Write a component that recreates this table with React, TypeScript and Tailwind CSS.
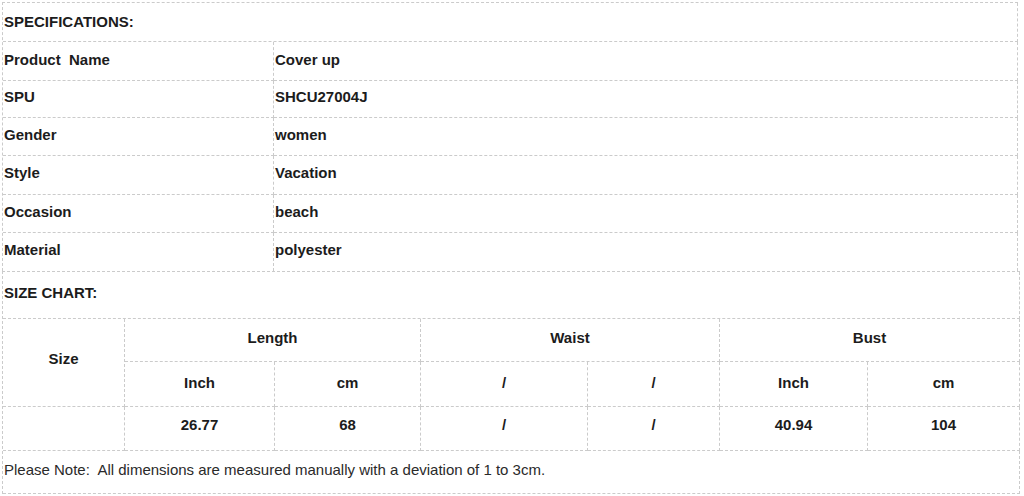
const specs: [string, string][] = [
  ["Product  Name", "Cover up"],
  ["SPU", "SHCU27004J"],
  ["Gender", "women"],
  ["Style", "Vacation"],
  ["Occasion", "beach"],
  ["Material", "polyester"],
];

// row heights measured line to line
const specHeights = ["h-[39px]", "h-[37px]", "h-[38px]", "h-[39px]", "h-[38px]", "h-[38px]"];

const line = "border-dashed border-[#cbcbcb]";
const cell = `border-r border-b ${line} flex items-center`;

export default function App() {
  return (
    <div
      className="min-h-screen bg-white text-[15px] leading-none text-[#1c1c1c]"
      style={{ fontFamily: '"Liberation Sans", Arial, sans-serif', whiteSpace: "pre" }}
    >
      {/* Specifications */}
      <div className={`ml-[2px] mt-[2px] w-[1016px] border-l border-t ${line}`}>
        <div className={`${cell} h-[39px] pb-[2px] pl-[1px] font-bold`}>SPECIFICATIONS:</div>
        <div className="grid grid-cols-[271px_1fr]">
          {specs.map(([label, value], i) => {
            const last = i === specs.length - 1;
            const cls = `${last ? `border-r ${line} flex items-center` : cell} ${specHeights[i]} ${i === 0 ? "pb-[3px]" : "pb-[5px]"} pl-[1px] font-bold`;
            return [
              <div key={label} className={cls}>
                {label}
              </div>,
              <div key={value} className={cls}>
                {value}
              </div>,
            ];
          })}
        </div>
      </div>

      {/* Size chart */}
      <div className={`ml-[2px] grid w-[1018px] grid-cols-[122px_150px_146px_167px_132px_148px_152px] grid-rows-[47px_43px_45px_44px_43px] border-l border-t ${line} font-bold`}>
        <div className={`${cell} col-span-7 pb-[6px] pl-[1px]`}>SIZE CHART:</div>

        <div className={`${cell} row-span-2 justify-center pb-[9px]`}>Size</div>
        <div className={`${cell} col-span-2 justify-center pb-[5px]`}>Length</div>
        <div className={`${cell} col-span-2 justify-center pb-[5px]`}>Waist</div>
        <div className={`${cell} col-span-2 justify-center pb-[5px]`}>Bust</div>

        {["Inch", "cm", "/", "/", "Inch", "cm"].map((t, i) => (
          <div key={`h${i}`} className={`${cell} justify-center pb-[4px]`}>
            {t}
          </div>
        ))}

        {["", "26.77", "68", "/", "/", "40.94", "104"].map((t, i) => (
          <div key={`d${i}`} className={`${cell} justify-center pb-[8px]`}>
            {t}
          </div>
        ))}

        <div className={`${cell} col-span-7 pb-[6px] pl-[1px] font-normal text-[#2a2a2a]`}>
          Please Note:  All dimensions are measured manually with a deviation of 1 to 3cm.
        </div>
      </div>
    </div>
  );
}
